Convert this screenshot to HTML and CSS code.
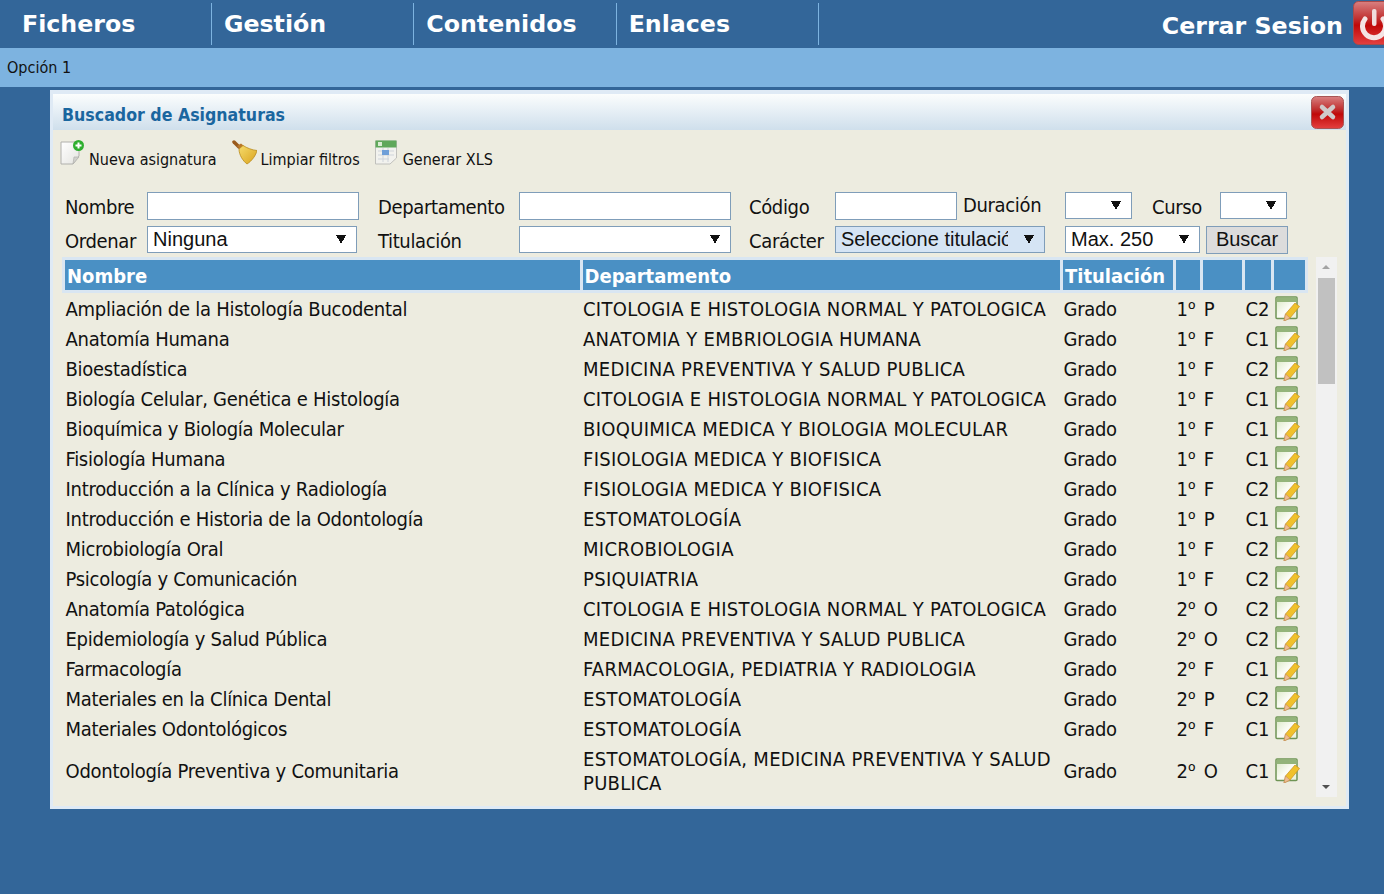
FILE: index.html
```html
<!DOCTYPE html>
<html lang="en">

<head>
    <meta charset="UTF-8">
    <title>Buscador de Asignaturas</title>
    <link rel="stylesheet" href="styles.css">
</head>

<body>
    <svg class="defs" width="0" height="0">
        <defs>
            <linearGradient id="paper" x1="0" y1="0" x2="1" y2="1">
                <stop offset="0" stop-color="#ffffff" />
                <stop offset="1" stop-color="#e4e4e0" />
            </linearGradient>
            <linearGradient id="sheet" x1="0" y1="0" x2="1" y2="1">
                <stop offset="0" stop-color="#d6e6c0" />
                <stop offset="0.55" stop-color="#fbfcf6" />
                <stop offset="1" stop-color="#e6efd8" />
            </linearGradient>
            <linearGradient id="straw" x1="0" y1="0" x2="1" y2="1">
                <stop offset="0" stop-color="#f6dc6c" />
                <stop offset="1" stop-color="#d9a21c" />
            </linearGradient>
            <linearGradient id="red" x1="0" y1="0" x2="0" y2="1">
                <stop offset="0" stop-color="#d98080" />
                <stop offset="0.4" stop-color="#c03030" />
                <stop offset="0.55" stop-color="#c00808" />
                <stop offset="1" stop-color="#e44040" />
            </linearGradient>
            <symbol id="edit" viewBox="0 0 25 25">
                <rect x="1" y="1" width="21" height="21.5" rx="1" fill="url(#sheet)" stroke="#6f9455" stroke-width="1.5" />
                <rect x="1.5" y="1.5" width="20" height="4.5" fill="#93b47a" />
                <path d="M10.5 18 L20 7 L24.5 10.5 L15 22 L9 25 Z" fill="#f0c12c" stroke="#c88f1c" stroke-width="0.7" />
                <path d="M9 25 L10.5 18 L15 22 Z" fill="#efbd92" stroke="#c08a60" stroke-width="0.6" />
            </symbol>
        </defs>
    </svg>

    <nav class="menu">
        <a class="menu-item first">Ficheros</a>
        <a class="menu-item">Gestión</a>
        <a class="menu-item">Contenidos</a>
        <a class="menu-item">Enlaces</a>
        <a class="logout">Cerrar Sesion</a>
        <svg class="power" width="31" height="44" viewBox="0 0 31 44">
            <rect x="0.5" y="0.5" width="44" height="43" rx="5" fill="url(#red)" stroke="#a84a4a" />
            <path d="M12 18 A11.5 11.5 0 1 0 30 18" fill="none" stroke="#f4e4e4" stroke-width="5" stroke-linecap="round" />
            <rect x="19" y="8" width="4.5" height="17" rx="2" fill="#f0dede" />
        </svg>
    </nav>
    <div class="submenu">Opción 1</div>

    <div class="dialog">
        <div class="dialog-title">
            <span class="dialog-name">Buscador de Asignaturas</span>
            <svg class="close" width="33" height="33" viewBox="0 0 33 33">
                <rect x="0.5" y="0.5" width="32" height="32" rx="5" fill="url(#red)" stroke="#a85454" />
                <path d="M11 11 L22 21 M22 11 L11 21" stroke="#cfcaca" stroke-width="4.5" stroke-linecap="round" />
            </svg>
        </div>

        <div class="dialog-body">
            <div class="toolbar">
                <a class="tool new">
                    <svg width="25" height="25" viewBox="0 0 25 25">
                        <path d="M1 2 H19 V16 L13 24 H1 Z" fill="url(#paper)" stroke="#b0b0ac" />
                        <path d="M13 24 L14 17 H19 Z" fill="#d0d0cc" stroke="#b0b0ac" stroke-width="0.7" />
                        <circle cx="18.5" cy="5.5" r="5.5" fill="#2eae2e" />
                        <path d="M18.5 2.5 V8.5 M15.5 5.5 H21.5" stroke="#fff" stroke-width="2" />
                    </svg>
                    <span>Nueva asignatura</span>
                </a>
                <a class="tool broom">
                    <svg width="25" height="25" viewBox="0 0 25 25">
                        <path d="M2 2 L7 7" stroke="#9a5a1c" stroke-width="3.5" stroke-linecap="round" />
                        <path d="M5 6 L9 3.5 L12 6 L8 9 Z" fill="#b9772a" />
                        <path d="M7 9 L11 5.5 C15 8 20 10 25 10.5 C24 15 20 21 15 24 C11 21 7 15 7 9 Z" fill="url(#straw)" stroke="#b98a1c" stroke-width="0.8" />
                    </svg>
                    <span>Limpiar filtros</span>
                </a>
                <a class="tool xls">
                    <svg width="22" height="25" viewBox="0 0 22 25">
                        <path d="M0.5 1 H21.5 V18 L15 24 H0.5 Z" fill="#f2f2ee" stroke="#c0c0bc" />
                        <rect x="0.5" y="0.5" width="21" height="7" fill="#5fa85a" />
                        <rect x="3" y="2" width="4" height="4" fill="#d9ecd2" />
                        <path d="M3 11 H19 M3 15 H19 M3 19 H14 M8 8 V22 M13 8 V22" stroke="#cfd4da" />
                        <rect x="7" y="10" width="7" height="5" fill="#6f9fd8" />
                    </svg>
                    <span>Generar XLS</span>
                </a>
            </div>

            <div class="filters">
                <label>Nombre</label>
                <input class="field" type="text">
                <label>Departamento</label>
                <input class="field" type="text">
                <label>Código</label>
                <input class="field" type="text">
                <label class="top-label">Duración</label>
                <select class="field tiny"><option></option></select>
                <label>Curso</label>
                <select class="field tiny"><option></option></select>

                <label>Ordenar</label>
                <select class="field order"><option>Ninguna</option></select>
                <label>Titulación</label>
                <select class="field"><option></option></select>
                <label>Carácter</label>
                <select class="field blue"><option>Seleccione titulación</option></select>
                <select class="field max"><option>Max. 250</option></select>
                <button class="search">Buscar</button>
            </div>

            <div class="results">
                <div class="table-box">
                    <table>
                        <colgroup>
                            <col class="c-name">
                            <col class="c-dept">
                            <col class="c-tit">
                            <col class="c-year">
                            <col class="c-type">
                            <col class="c-term">
                            <col class="c-edit">
                        </colgroup>
                        <thead>
                            <tr>
                                <th>Nombre</th>
                                <th>Departamento</th>
                                <th>Titulación</th>
                                <th></th>
                                <th></th>
                                <th></th>
                                <th></th>
                            </tr>
                        </thead>
                        <tbody>
                            <tr><td>Ampliación de la Histología Bucodental</td><td>CITOLOGIA E HISTOLOGIA NORMAL Y PATOLOGICA</td><td>Grado</td><td colspan="2">1<span class="ord">º</span> P</td><td>C2</td><td><svg class="edit"><use href="#edit" /></svg></td></tr>
                            <tr><td>Anatomía Humana</td><td>ANATOMIA Y EMBRIOLOGIA HUMANA</td><td>Grado</td><td colspan="2">1<span class="ord">º</span> F</td><td>C1</td><td><svg class="edit"><use href="#edit" /></svg></td></tr>
                            <tr><td>Bioestadística</td><td>MEDICINA PREVENTIVA Y SALUD PUBLICA</td><td>Grado</td><td colspan="2">1<span class="ord">º</span> F</td><td>C2</td><td><svg class="edit"><use href="#edit" /></svg></td></tr>
                            <tr><td>Biología Celular, Genética e Histología</td><td>CITOLOGIA E HISTOLOGIA NORMAL Y PATOLOGICA</td><td>Grado</td><td colspan="2">1<span class="ord">º</span> F</td><td>C1</td><td><svg class="edit"><use href="#edit" /></svg></td></tr>
                            <tr><td>Bioquímica y Biología Molecular</td><td>BIOQUIMICA MEDICA Y BIOLOGIA MOLECULAR</td><td>Grado</td><td colspan="2">1<span class="ord">º</span> F</td><td>C1</td><td><svg class="edit"><use href="#edit" /></svg></td></tr>
                            <tr><td>Fisiología Humana</td><td>FISIOLOGIA MEDICA Y BIOFISICA</td><td>Grado</td><td colspan="2">1<span class="ord">º</span> F</td><td>C1</td><td><svg class="edit"><use href="#edit" /></svg></td></tr>
                            <tr><td>Introducción a la Clínica y Radiología</td><td>FISIOLOGIA MEDICA Y BIOFISICA</td><td>Grado</td><td colspan="2">1<span class="ord">º</span> F</td><td>C2</td><td><svg class="edit"><use href="#edit" /></svg></td></tr>
                            <tr><td>Introducción e Historia de la Odontología</td><td>ESTOMATOLOGÍA</td><td>Grado</td><td colspan="2">1<span class="ord">º</span> P</td><td>C1</td><td><svg class="edit"><use href="#edit" /></svg></td></tr>
                            <tr><td>Microbiología Oral</td><td>MICROBIOLOGIA</td><td>Grado</td><td colspan="2">1<span class="ord">º</span> F</td><td>C2</td><td><svg class="edit"><use href="#edit" /></svg></td></tr>
                            <tr><td>Psicología y Comunicación</td><td>PSIQUIATRIA</td><td>Grado</td><td colspan="2">1<span class="ord">º</span> F</td><td>C2</td><td><svg class="edit"><use href="#edit" /></svg></td></tr>
                            <tr><td>Anatomía Patológica</td><td>CITOLOGIA E HISTOLOGIA NORMAL Y PATOLOGICA</td><td>Grado</td><td colspan="2">2<span class="ord">º</span> O</td><td>C2</td><td><svg class="edit"><use href="#edit" /></svg></td></tr>
                            <tr><td>Epidemiología y Salud Pública</td><td>MEDICINA PREVENTIVA Y SALUD PUBLICA</td><td>Grado</td><td colspan="2">2<span class="ord">º</span> O</td><td>C2</td><td><svg class="edit"><use href="#edit" /></svg></td></tr>
                            <tr><td>Farmacología</td><td>FARMACOLOGIA, PEDIATRIA Y RADIOLOGIA</td><td>Grado</td><td colspan="2">2<span class="ord">º</span> F</td><td>C1</td><td><svg class="edit"><use href="#edit" /></svg></td></tr>
                            <tr><td>Materiales en la Clínica Dental</td><td>ESTOMATOLOGÍA</td><td>Grado</td><td colspan="2">2<span class="ord">º</span> P</td><td>C2</td><td><svg class="edit"><use href="#edit" /></svg></td></tr>
                            <tr><td>Materiales Odontológicos</td><td>ESTOMATOLOGÍA</td><td>Grado</td><td colspan="2">2<span class="ord">º</span> F</td><td>C1</td><td><svg class="edit"><use href="#edit" /></svg></td></tr>
                            <tr><td>Odontología Preventiva y Comunitaria</td><td>ESTOMATOLOGÍA, MEDICINA PREVENTIVA Y SALUD PUBLICA</td><td>Grado</td><td colspan="2">2<span class="ord">º</span> O</td><td>C1</td><td><svg class="edit"><use href="#edit" /></svg></td></tr>
                        </tbody>
                    </table>
                </div>
                <div class="scrollbar">
                    <div class="arrow-up"></div>
                    <div class="thumb"></div>
                    <div class="arrow-down"></div>
                </div>
            </div>
        </div>
    </div>
</body>

</html>
```

FILE: styles.css
```css
html,
body {
    margin: 0;
    padding: 0;
    height: 894px;
    overflow: hidden;
}

body {
    font-family: "DejaVu Sans Condensed", "DejaVu Sans", sans-serif;
    background-color: #336699;
    color: #111;
}

.defs {
    position: absolute;
}

.menu {
    display: flex;
    align-items: flex-start;
    height: 48px;
    padding-top: 3px;
    box-sizing: border-box;
    color: #fff;
    font-family: "DejaVu Sans", sans-serif;
    font-weight: bold;
}

.menu-item {
    box-sizing: border-box;
    width: 202.34px;
    height: 42px;
    padding-left: 12px;
    border-right: 1px solid #7db3e0;
    font-size: 23.7px;
    line-height: 43px;
}

.menu-item.first {
    width: 203px;
    margin-left: 9px;
    padding-left: 13px;
}

.logout {
    margin-left: auto;
    margin-right: 10px;
    font-size: 23.7px;
    line-height: 46px;
}

.power {
    margin-top: -2px;
}

.submenu {
    height: 39px;
    padding-left: 7px;
    background-color: #7db3e0;
    font-size: 16px;
    line-height: 39px;
}

.dialog {
    box-sizing: border-box;
    width: 1299px;
    height: 719px;
    margin: 3px 0 0 50px;
    border: 3px solid #dfeaf5;
    border-top-width: 4px;
    background-color: #edece0;
}

.dialog-title {
    display: flex;
    align-items: center;
    justify-content: space-between;
    height: 36px;
    padding: 0 2px 0 9px;
    background: linear-gradient(#fbfdfd, #cfdfec);
    color: #1a669f;
    font-size: 17.6px;
    font-weight: bold;
}

.dialog-name {
    padding-top: 6px;
}

.close {
    margin-top: 1px;
}

.dialog-body {
    padding: 10px 0 0 7px;
}

.toolbar {
    display: flex;
    align-items: flex-end;
    height: 25px;
    font-size: 16px;
}

.tool {
    display: flex;
    align-items: flex-end;
    gap: 4px;
    line-height: 18px;
}

.tool span {
    margin-bottom: -4px;
}

.broom {
    margin-left: 15px;
}

.xls {
    margin-left: 15px;
    gap: 6px;
}

.filters {
    display: grid;
    grid-template-columns: 82px 231px 141px 230px 86px 128px 102px 87px 68px 68px;
    grid-auto-rows: 27px;
    row-gap: 7px;
    align-items: center;
    margin: 27px 0 0 5px;
    font-size: 20px;
}

.filters label {
    padding-top: 2px;
    letter-spacing: -0.35px;
}

.field {
    box-sizing: border-box;
    height: 27px;
    padding: 0 5px;
    border: 1px solid #7f9db9;
    border-radius: 0;
    background-color: #fff;
    color: #111;
    font-family: inherit;
    font-size: 20px;
}

input.field {
    width: 212px;
    height: 28px;
}

.filters input.field:nth-of-type(3) {
    width: 122px;
}

/* native arrow replaced with a flat black triangle */
.filters select.field {
    width: 212px;
    padding: 0 32px 2px 5px;
    appearance: none;
    background-image: linear-gradient(to top right, transparent 50%, #111 50%), linear-gradient(to top left, transparent 50%, #111 50%);
    background-repeat: no-repeat;
    background-size: 5px 9px, 5px 9px;
    background-position: right 15px center, right 10px center;
    font-family: "Liberation Sans", sans-serif;
}

.filters select.order {
    width: 210px;
}

.filters select.tiny {
    width: 67px;
}

.filters select.blue {
    grid-column: span 2;
    width: 210px;
    padding-right: 36px;
    background-color: #d5e4f4;
}

.filters select.max {
    grid-column: span 2;
    width: 135px;
}

.filters .top-label {
    margin-top: -3px;
}

.search {
    width: 82px;
    height: 28px;
    margin-left: -14px;
    padding: 0;
    border: 1px solid #7f9db9;
    background-color: #dcdcdc;
    color: #111;
    font-family: "Liberation Sans", sans-serif;
    font-size: 20px;
}

.results {
    display: flex;
    align-items: flex-start;
    margin-top: 4px;
}

.table-box {
    height: 541px;
    margin-left: 2px;
    overflow: hidden;
}

table {
    width: 1246px;
    border-collapse: collapse;
    table-layout: fixed;
    font-size: 20px;
    line-height: 24px;
}

.c-name { width: 517.5px; }
.c-dept { width: 480.5px; }
.c-tit { width: 113px; }
.c-year { width: 27px; }
.c-type { width: 42px; }
.c-term { width: 29px; }
.c-edit { width: 34px; }

th {
    height: 29px;
    padding: 1px 0 0 2px;
    border: 3px solid #d9e6f2;
    background-color: #4a90c4;
    color: #fff;
    font-size: 20px;
    font-weight: bold;
    text-align: left;
}

td {
    padding: 4px 2px 2px 2px;
    vertical-align: middle;
}

td:nth-child(1) {
    letter-spacing: -0.27px;
}

td:nth-child(2) {
    letter-spacing: 0.3px;
}

td:nth-child(3) {
    letter-spacing: -0.3px;
}

td:nth-child(4) {
    word-spacing: 2.5px;
}

.ord {
    font-family: "Noto Sans", sans-serif;
}

.edit {
    display: block;
    width: 25px;
    height: 25px;
    margin-top: -2px;
}

.scrollbar {
    position: relative;
    width: 21px;
    height: 540px;
    margin-left: 8px;
    background-color: #f1f1f1;
}

.thumb {
    box-sizing: border-box;
    width: 17px;
    height: 106px;
    margin: 21px 0 0 2px;
    background-color: #c1c1c1;
}

.arrow-up,
.arrow-down {
    position: absolute;
    left: 6px;
    width: 0;
    height: 0;
    border-left: 4px solid transparent;
    border-right: 4px solid transparent;
}

.arrow-up {
    top: 8px;
    border-bottom: 4px solid #a3a3a3;
}

.arrow-down {
    bottom: 8px;
    border-top: 4px solid #505050;
}
```
